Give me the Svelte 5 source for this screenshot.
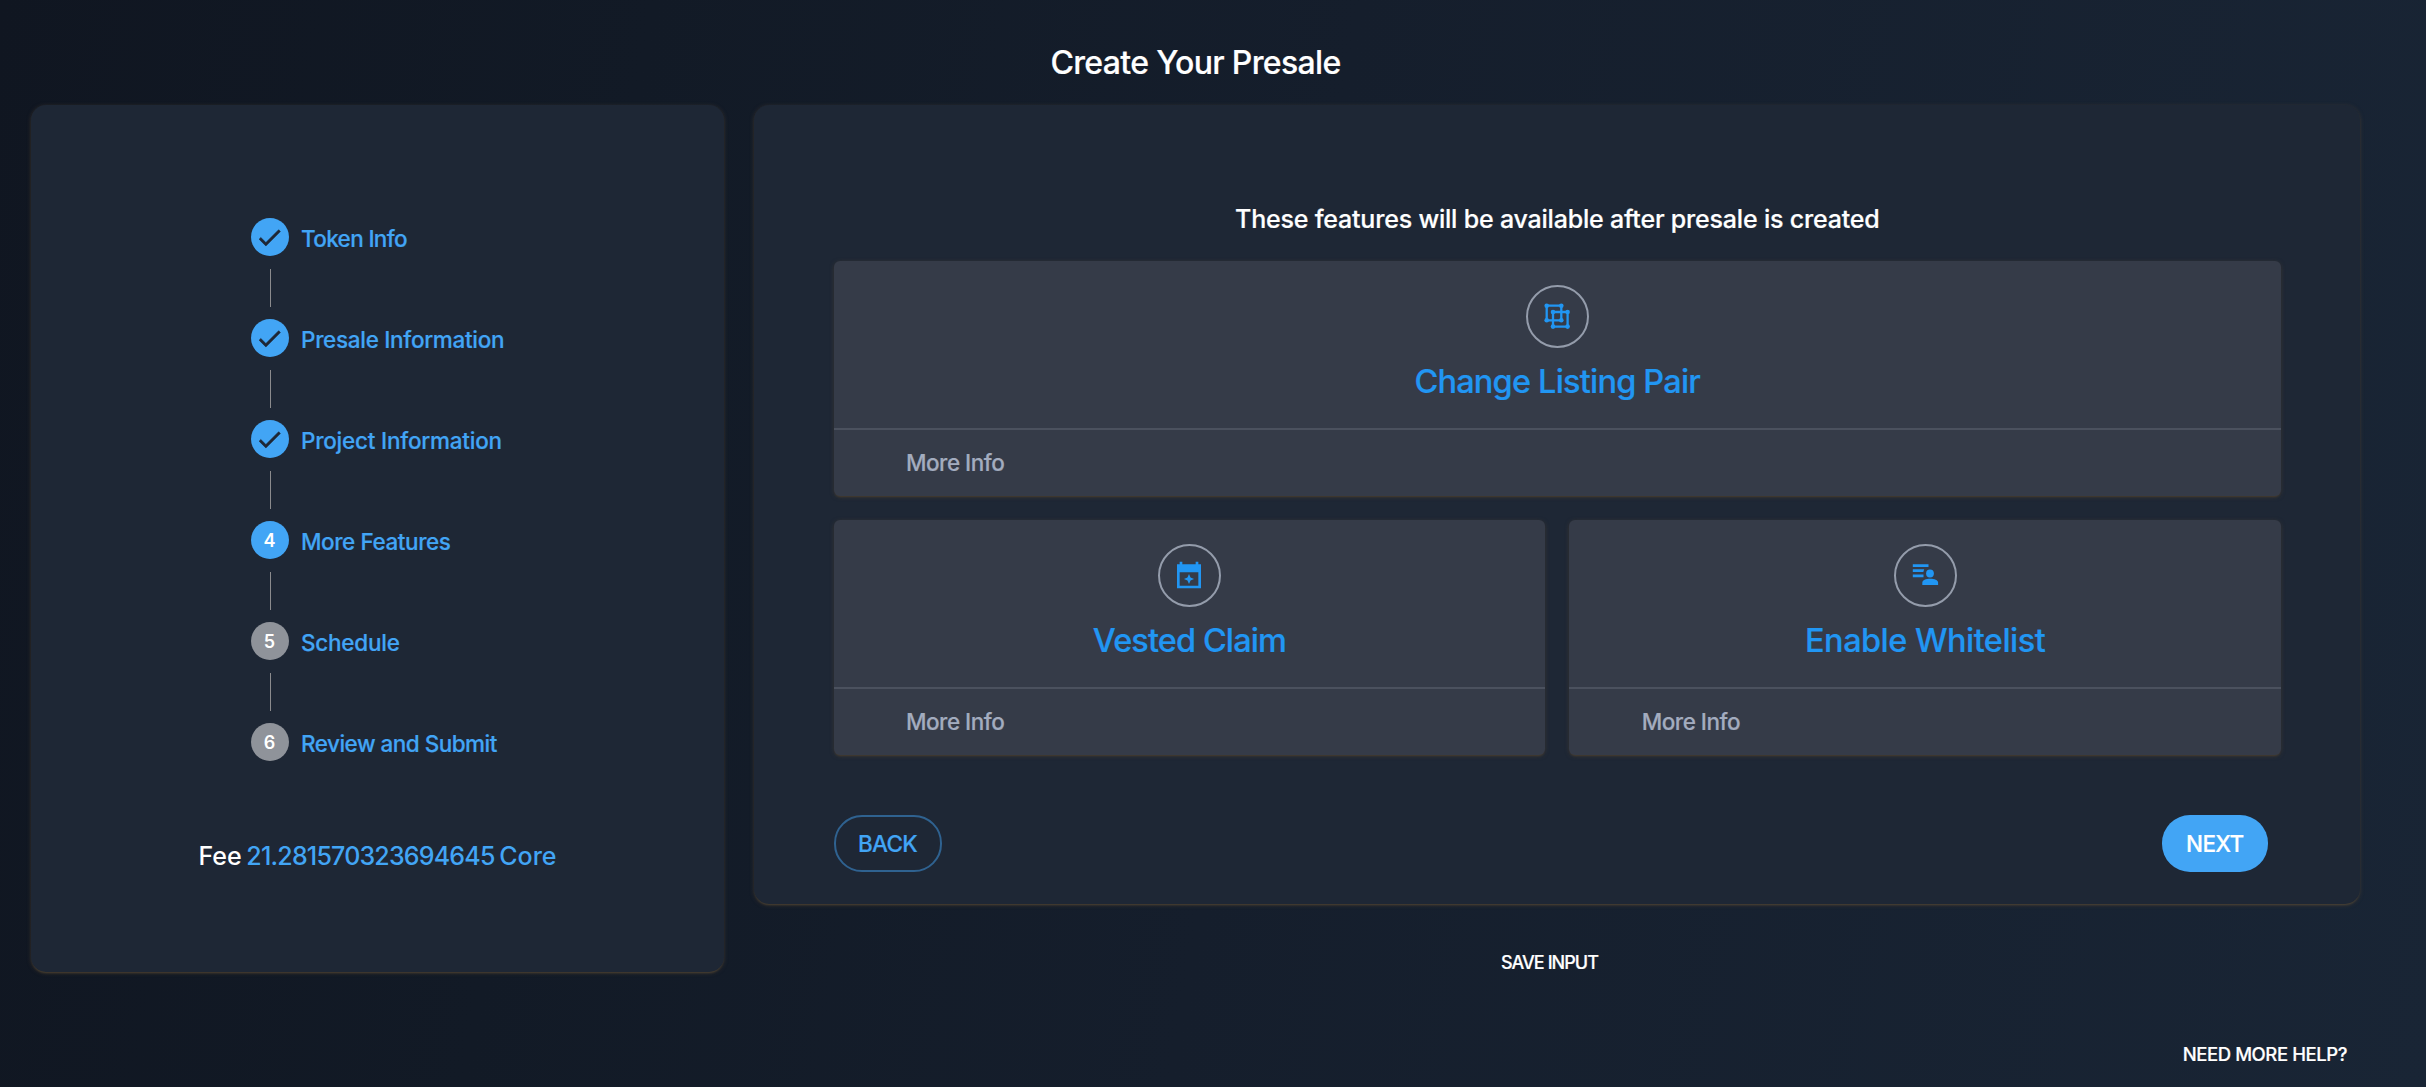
<script>
  const steps = [
    { label: 'Token Info', state: 'done', cls: 'token' },
    { label: 'Presale Information', state: 'done', cls: 'presale' },
    { label: 'Project Information', state: 'done', cls: 'project' },
    { label: 'More Features', state: 'active', cls: 'features' },
    { label: 'Schedule', state: 'todo', cls: 'schedule' },
    { label: 'Review and Submit', state: 'todo', cls: 'review' }
  ];
  const features = [
    { title: 'Change Listing Pair', icon: 'group', wide: true },
    { title: 'Vested Claim', icon: 'calendar', wide: false },
    { title: 'Enable Whitelist', icon: 'people', wide: false }
  ];
</script>

<div class="page">
  <header><h1>Create Your Presale</h1></header>
  <main>
    <aside class="panel side">
      <ol class="steps">
        {#each steps as step, i}
          <li>
            <span class="dot {step.state}">
              {#if step.state === 'done'}
                <svg viewBox="0 0 24 24"><path d="M9 16.170 4.830 12l-1.420 1.410L9 19 21 7l-1.410-1.410z" /></svg>
              {:else}{i + 1}{/if}
            </span>
            <span class="label {step.cls}">{step.label}</span>
          </li>
        {/each}
      </ol>
      <p class="fee">Fee <span class="amount">21.281570323694645</span> <span class="unit">Core</span></p>
    </aside>
    <div class="right">
      <section class="panel body">
        <h2>These features will be available after presale is created</h2>
        <div class="cards">
          {#each features as f}
            <article class="card" class:wide={f.wide}>
              <div class="top">
                <span class="ring">
                  {#if f.icon === 'group'}
                    <svg viewBox="0 0 32 32">
                      <path class="line" d="M5.7 5.7h14.600v14.600H5.700zM12 12h14.600v14.600H12z" />
                      {#each [[5.7, 5.7], [20.3, 5.7], [5.7, 20.3], [20.3, 20.3], [12, 12], [26.6, 12], [12, 26.6], [26.6, 26.6]] as [cx, cy]}
                        <circle {cx} {cy} r="2.3" />
                      {/each}
                    </svg>
                  {:else if f.icon === 'calendar'}
                    <svg viewBox="0 0 24 24">
                      <path fill-rule="evenodd" d="M21 4h-2V2h-2v2H7V2H5v2H3v18h18zM5 20V10h14v10z" />
                      <path d="m12 11.200 1.150 2.650L15.800 15l-2.650 1.150L12 18.800l-1.150-2.650L8.200 15l2.650-1.150z" />
                    </svg>
                  {:else}
                    <svg viewBox="0 0 32 32">
                      <path d="M3.800 5.200h15.700V8H3.800zM3.800 10.300h11.400l-.9 2.800H3.800zM3.800 15.500h10.700v2.800H3.800z" />
                      <circle cx="21" cy="14.5" r="3.9" />
                      <path d="M13.300 26v-2.300c0-2.900 3.600-4 7.900-4s7.900 1.100 7.900 4V26z" />
                    </svg>
                  {/if}
                </span>
                <h3 class={f.icon}>{f.title}</h3>
              </div>
              <div class="more">More Info</div>
            </article>
          {/each}
        </div>
        <div class="actions">
          <button class="back">BACK</button>
          <button class="next">NEXT</button>
        </div>
      </section>
      <div class="save">SAVE INPUT</div>
    </div>
  </main>
  <footer>NEED MORE HELP?</footer>
</div>

<style>
  :global(body) { background: #131b27; overflow: hidden; }
  .page {
    box-sizing: border-box; width: 2426px; height: 1087px; color: #fff;
    font-family: Inter, "Liberation Sans", sans-serif; font-weight: 500;
    background: linear-gradient(100deg, #101621 0%, #121a26 25%, #151e2c 52%, #192535 100%);
    display: flex; flex-direction: column;
  }
  h1, h2, h3, p, ol { margin: 0; padding: 0; font-weight: 500; }
  header { height: 104.500px; width: 2391px; text-align: center; flex: none; }
  h1 { font-size: 32px; line-height: 40px; padding-top: 43px; letter-spacing: -.66px; -webkit-text-stroke: .2px; }
  main { display: flex; gap: 30px; padding-left: 31px; align-items: flex-start; height: 925px; }
  .panel { box-sizing: border-box; background: #1e2735; border-radius: 15px; box-shadow: 0 2px 2px -1px rgba(92, 76, 52, .6), 0 1px 4px rgba(92, 74, 52, .5); }
  .side { width: 693px; height: 867.500px; padding-top: 113.500px; }
  .steps { list-style: none; padding-left: 219.500px; }
  li { display: flex; align-items: center; height: 38px; gap: 12.500px; margin-bottom: 63px; position: relative; }
  li:not(:last-child)::after { content: ''; position: absolute; left: 19px; top: 50.500px; width: 1.500px; height: 38px; background: #8b8b8d; }
  .dot { width: 38px; height: 38px; border-radius: 50%; background: #42a5f5; display: flex; align-items: center; justify-content: center; font-size: 18px; font-weight: 600; }
  .dot.todo { background: #8f939a; }
  .dot svg { width: 29px; height: 29px; fill: #1e2735; stroke: #1e2735; stroke-width: .5; }
  .label { color: #42a5f5; font-size: 22.500px; position: relative; top: 1px; -webkit-text-stroke: .2px; }
  .token { letter-spacing: -.66px; }
  .presale { letter-spacing: -.31px; }
  .project { letter-spacing: -.23px; }
  .features { letter-spacing: -.43px; }
  .schedule { letter-spacing: -.25px; }
  .review { letter-spacing: -.52px; }
  .fee { text-align: center; font-size: 25px; line-height: 32px; padding-top: 16px; word-spacing: -2px; }
  .amount { color: #42a5f5; letter-spacing: -.8px; }
  .unit { color: #42a5f5; letter-spacing: 0; }
  .right { width: 1606px; }
  .body { height: 799.500px; padding: 97px 79px 0 79.500px; }
  h2 { text-align: center; font-size: 25px; line-height: 34px; height: 59px; letter-spacing: -.2px; -webkit-text-stroke: .2px; }
  .cards { display: grid; grid-template-columns: 1fr 1fr; gap: 24px; }
  .card { background: #353b48; border-radius: 6px; height: 235px; box-shadow: 0 2px 2px -1px rgba(85, 68, 45, .6), 0 1px 4px rgba(80, 65, 48, .5); }
  .wide { grid-column: 1 / 3; }
  .top { box-sizing: border-box; height: 169px; padding-top: 24px; border-bottom: 2px solid #4b515e; display: flex; flex-direction: column; align-items: center; }
  .ring { box-sizing: border-box; width: 63px; height: 63px; border-radius: 50%; border: 2px solid #949cab; display: flex; align-items: center; justify-content: center; }
  .ring svg { width: 32px; height: 32px; fill: #2196f3; }
  .ring .line { fill: none; stroke: #2196f3; stroke-width: 2.300; }
  h3 { color: #2196f3; font-size: 32.500px; line-height: 40px; margin-top: 14.500px; -webkit-text-stroke: .2px; }
  h3.group { letter-spacing: -.8px; }
  h3.calendar { letter-spacing: -.9px; }
  h3.people { letter-spacing: -.54px; }
  .more { padding-left: 72.500px; line-height: 66px; font-size: 22.500px; color: #a3acbf; letter-spacing: -.5px; -webkit-text-stroke: .2px; }
  .actions { display: flex; justify-content: space-between; padding: 60px 13px 0 0; }
  button { box-sizing: border-box; height: 57.500px; border-radius: 28px; font: inherit; font-size: 22.500px; padding: 0; letter-spacing: -.7px; -webkit-text-stroke: .2px; }
  .back { width: 108px; border: 2px solid #2f6290; color: #42a5f5; background: none; }
  .next { width: 106.500px; border: 0; color: #fff; background: #42a5f5; }
  .save { text-align: center; font-size: 18px; line-height: 26px; padding: 46px 15px 0 0; letter-spacing: -.95px; -webkit-text-stroke: .2px; }
  footer { text-align: right; padding-right: 79px; font-size: 18.500px; line-height: 26px; margin-top: 11px; letter-spacing: -.43px; -webkit-text-stroke: .2px; }
</style>
